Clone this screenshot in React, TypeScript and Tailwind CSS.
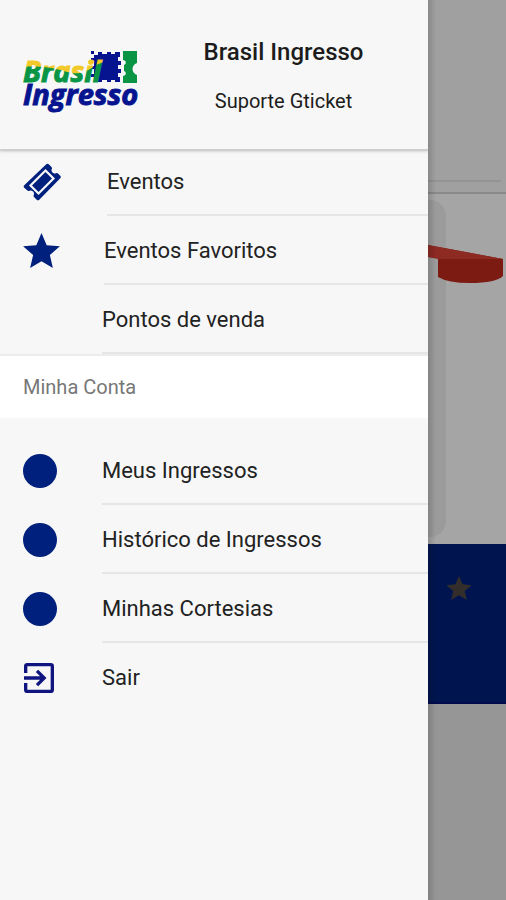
import type { ReactNode } from "react";

function Logo() {
  return (
    <svg viewBox="0 0 120 67" className="h-[67px] w-[120px] shrink-0" role="img" aria-label="Brasil Ingresso">
      <defs>
        <pattern id="flag" patternUnits="userSpaceOnUse" width="120" height="67">
          <path d="M0 0h120v67H0z" fill="#0a9545" />
          <path d="M0 0h120v14C100 14 88 14 78 17S64 29 50 27 28 19 0 21z" fill="#f2c928" />
        </pattern>
      </defs>
      <path
        d="M71 9h4V6h4v2h5V6h4v2h4V6h5v5h-2v4h3v4h-3v4h3v4h-3v4h2v5h-5v-2h-4v2h-4v-2h-5v2h-4v-2h-4z"
        fill="#07148f"
      />
      <path d="M68 5h3v3h-3zM68 12h3v3h-3zM68 20h3v3h-3zM68 28h3v3h-3z" fill="#07148f" />
      <path d="M100 5h14v12c-6 2-6 10 0 12v8h-14v-7c3 0 4-4 1-5v-6c3-1 2-5-1-5z" fill="#0a9545" />
      <text
        x="0"
        y="36"
        fill="url(#flag)"
        stroke="url(#flag)"
        strokeWidth="1"
        className="font-['Open_Sans',sans-serif] text-[29px] font-bold italic"
      >
        Brasil
      </text>
      <text
        x="0"
        y="59"
        fill="#07148f"
        stroke="#07148f"
        strokeWidth="1"
        className="font-['Open_Sans',sans-serif] text-[29px] font-bold italic"
      >
        Ingresso
      </text>
    </svg>
  );
}

function TicketIcon() {
  return (
    <svg viewBox="0 0 38 38" className="size-[38px]" aria-hidden="true">
      <path
        d="M23 1.500a2 2 0 0 1 3 0l2.500 2.500a2 2 0 0 1 0 2.500 3.500 3.500 0 0 0 4 4 2 2 0 0 1 2.500 0l2 2a2 2 0 0 1 0 3L16.500 36.500a2 2 0 0 1-3 0L11 34a2 2 0 0 1 0-2.500 3.500 3.500 0 0 0-4-4 2 2 0 0 1-2.500 0L1.500 25a2 2 0 0 1 0-3z"
        fill="#00207d"
      />
      <path d="M22.500 7.500 30.500 15.500 15.500 30.500 7.500 22.500z" fill="none" stroke="#f7f7f7" strokeWidth="2.200" />
    </svg>
  );
}

function StarIcon({ className }: { className: string }) {
  return (
    <svg viewBox="2 2 20 19" className={className} fill="currentColor" aria-hidden="true">
      <path d="M12 17.270 18.180 21l-1.640-7.030L22 9.240l-7.190-.61L12 2 9.190 8.630 2 9.240l5.460 4.730L5.820 21z" />
    </svg>
  );
}

function ExitIcon() {
  return (
    <svg viewBox="3 3 18 18" className="ml-px size-[30px]" fill="#10147f" aria-hidden="true">
      <path d="M10.090 15.590 11.500 17l5-5-5-5-1.410 1.410L12.670 11H3v2h9.670zM19 3H5a2 2 0 0 0-2 2v4h2V5h14v14H5v-4H3v4a2 2 0 0 0 2 2h14a2 2 0 0 0 2-2V5a2 2 0 0 0-2-2z" />
    </svg>
  );
}

function Dot() {
  return <span className="size-[34px] rounded-full bg-[#00207d]" />;
}

function Item({
  label,
  icon,
  inset = "ml-[102px]",
  divider = true,
}: {
  label: string;
  icon?: ReactNode;
  inset?: string;
  divider?: boolean;
}) {
  return (
    <li>
      <button type="button" className="relative block w-full text-left">
        <span className="absolute inset-y-0 left-[23px] flex items-center">{icon}</span>
        <span
          className={`${inset} flex h-[69px] items-center border-b-2 pt-[2px] text-[22px] leading-7 text-[#222] ${
            divider ? "border-[#e6e6e6]" : "border-transparent"
          }`}
        >
          {label}
        </span>
      </button>
    </li>
  );
}

function PageBehind() {
  return (
    <div className="relative flex w-[78px] shrink-0 flex-col bg-[#969696]" aria-hidden="true">
      <div className="flex h-[194px] flex-col justify-end border-b-2 border-[#898989] bg-[#a0a0a0] pb-[10px]">
        <div className="mr-[5px] h-[2px] bg-[#949494]" />
      </div>
      <div className="h-[350px] bg-[#a5a5a5] pt-[6px]">
        <div className="h-[337px] w-[18px] rounded-r-2xl bg-[#9b9b9b] pt-[45px]">
          <svg viewBox="0 0 78 40" className="h-[40px] w-[78px]">
            <path d="M0 0 75 14v17Q68 38 42 38 20 38 10 32V13L0 12z" fill="#7b1b12" />
            <path d="M0 0 75 14 10 14 0 12z" fill="#8d2a22" />
          </svg>
        </div>
      </div>
      <div className="h-[160px] border-b-2 border-[#000a4d] bg-[#00154f] pt-[32px] pl-[18px] text-[#332d2b]">
        <StarIcon className="h-[24px] w-[26px]" />
      </div>
      <div className="absolute inset-y-0 left-0 w-[8px] bg-linear-to-r from-black/15 to-transparent" />
    </div>
  );
}

export default function App() {
  return (
    <div className="flex min-h-screen font-[Roboto,sans-serif]">
      <aside className="min-w-0 flex-1 bg-[#f7f7f7]">
        <header className="flex h-[151px] items-center border-b-2 border-[#cfcfcf] pt-[10px] pl-[23px] shadow-sm">
          <Logo />
          <div className="flex-1 pr-1 pb-[8px] text-center text-[#1c1c1c]">
            <h1 className="text-[24px] leading-7 font-medium">Brasil Ingresso</h1>
            <p className="mt-[23px] text-[20px] leading-6">Suporte Gticket</p>
          </div>
        </header>
        <nav>
          <ul className="-mt-[4px]">
            <Item label="Eventos" icon={<TicketIcon />} inset="ml-[107px]" />
            <Item label="Eventos Favoritos" icon={<StarIcon className="h-[35px] w-[37px] text-[#00207d]" />} inset="ml-[104px]" />
            <Item label="Pontos de venda" />
          </ul>
          <h2 className="flex h-[64px] items-center border-t-2 border-[#ececec] bg-white pl-[23px] text-[20px] leading-6 text-[#777]">
            Minha Conta
          </h2>
          <ul className="pt-[18px]">
            <Item label="Meus Ingressos" icon={<Dot />} />
            <Item label="Histórico de Ingressos" icon={<Dot />} />
            <Item label="Minhas Cortesias" icon={<Dot />} />
            <Item label="Sair" icon={<ExitIcon />} divider={false} />
          </ul>
        </nav>
      </aside>
      <PageBehind />
    </div>
  );
}
